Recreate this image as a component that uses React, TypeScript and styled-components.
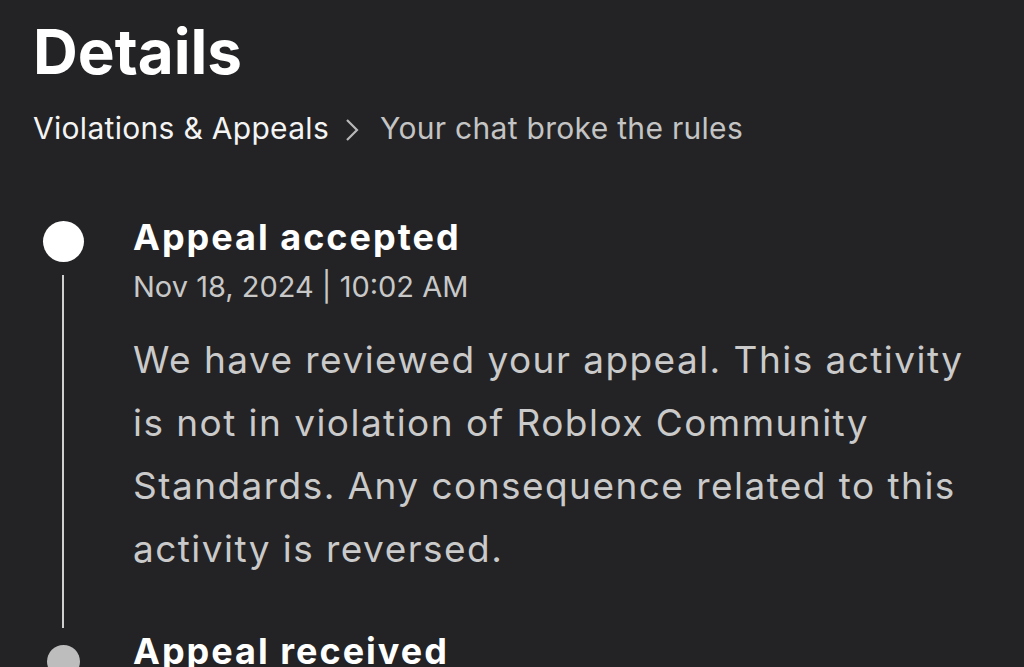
import React from "react";
import styled, { createGlobalStyle } from "styled-components";

const GlobalStyle = createGlobalStyle`
  html, body {
    margin: 0;
    padding: 0;
    background: #232325;
  }
  body {
    font-family: Inter, "Noto Sans", sans-serif;
    overflow: hidden;
  }
`;

const Page = styled.div`
  height: 667px;
  padding: 16px 0 0 33px;
  box-sizing: border-box;
  overflow: hidden;
`;

const Title = styled.h1`
  margin: 0;
  color: #ffffff;
  font-size: 62px;
  font-weight: 700;
  line-height: 72px;
  letter-spacing: 0;
`;

const Breadcrumb = styled.div`
  display: flex;
  align-items: center;
  margin-top: 22px;
  font-size: 30px;
  line-height: 36px;
  letter-spacing: 0.3px;
`;

const Crumb = styled.span<{ $current?: boolean }>`
  color: ${(p) => (p.$current ? "#c4c4c4" : "#f4f4f4")};
`;

const Chevron = styled.svg`
  width: 14px;
  height: 26px;
  margin: 3px 21px 0 16px;
`;

const Timeline = styled.div`
  margin-top: 71px;
  display: flex;
  flex-direction: column;
`;

const Item = styled.div`
  display: grid;
  grid-template-columns: 100px 1fr;
`;

const Rail = styled.div`
  display: flex;
  flex-direction: column;
  align-items: center;
  width: 60px;
`;

const Dot = styled.div<{ $active?: boolean }>`
  width: ${(p) => (p.$active ? 41 : 33)}px;
  height: ${(p) => (p.$active ? 41 : 33)}px;
  border-radius: 50%;
  background: ${(p) => (p.$active ? "#ffffff" : "#bdbdbd")};
  margin-top: ${(p) => (p.$active ? 4 : 14)}px;
`;

const Line = styled.div`
  flex: 1;
  width: 2px;
  background: #cfcfcf;
  margin: 13px 0 3px;
`;

const Content = styled.div`
  padding-bottom: 51px;
`;

const ItemTitle = styled.div`
  color: #ffffff;
  font-size: 36px;
  font-weight: 700;
  line-height: 40px;
  letter-spacing: 2px;
`;

const Stamp = styled.div`
  color: #c8c8c8;
  font-size: 29px;
  line-height: 34px;
  margin-top: 13px;
`;

const Body = styled.p`
  margin: 24px 0 0;
  color: #cacaca;
  font-size: 37px;
  line-height: 63px;
  letter-spacing: 1.45px;
  white-space: nowrap;
`;

const bodyLines = [
  "We have reviewed your appeal. This activity",
  "is not in violation of Roblox Community",
  "Standards. Any consequence related to this",
  "activity is reversed.",
];

export default function App() {
  return (
    <>
      <GlobalStyle />
      <Page>
        <Title>Details</Title>
        <Breadcrumb>
          <Crumb>Violations &amp; Appeals</Crumb>
          <Chevron viewBox="0 0 14 26">
            <path d="M2 3 L12 13 L2 23" fill="none" stroke="#b8b8b8" strokeWidth="2.2" />
          </Chevron>
          <Crumb $current>Your chat broke the rules</Crumb>
        </Breadcrumb>
        <Timeline>
          <Item>
            <Rail>
              <Dot $active />
              <Line />
            </Rail>
            <Content>
              <ItemTitle>Appeal accepted</ItemTitle>
              <Stamp>Nov 18, 2024 | 10:02 AM</Stamp>
              <Body>
                {bodyLines.map((l, i) => (
                  <React.Fragment key={i}>
                    {l}
                    {i < bodyLines.length - 1 && <br />}
                  </React.Fragment>
                ))}
              </Body>
            </Content>
          </Item>
          <Item>
            <Rail>
              <Dot />
            </Rail>
            <Content>
              <ItemTitle>Appeal received</ItemTitle>
            </Content>
          </Item>
        </Timeline>
      </Page>
    </>
  );
}
